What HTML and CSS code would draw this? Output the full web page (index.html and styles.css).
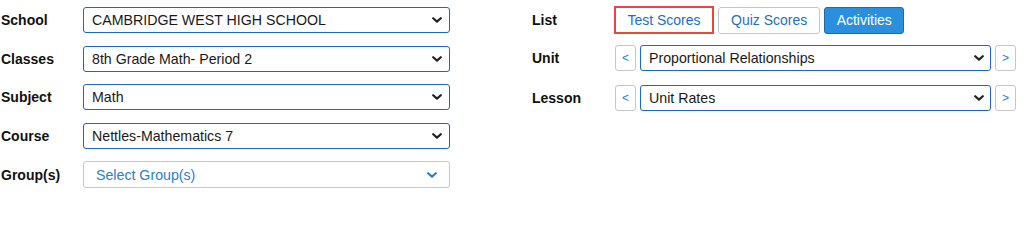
FILE: index.html
```html
<!DOCTYPE html>
<html>
<head>
<meta charset="utf-8">
<link rel="stylesheet" href="styles.css">
</head>
<body>
<div class="page">
  <div class="col left">
    <div class="row">
      <div class="label">School</div>
      <div class="select"><span class="val">CAMBRIDGE WEST HIGH SCHOOL</span><svg class="chev" viewBox="0 0 10 6" width="10" height="6"><path d="M1.2 1.2 L5 4.6 L8.8 1.2" /></svg></div>
    </div>
    <div class="row">
      <div class="label">Classes</div>
      <div class="select"><span class="val">8th Grade Math- Period 2</span><svg class="chev" viewBox="0 0 10 6" width="10" height="6"><path d="M1.2 1.2 L5 4.6 L8.8 1.2" /></svg></div>
    </div>
    <div class="row">
      <div class="label">Subject</div>
      <div class="select"><span class="val">Math</span><svg class="chev" viewBox="0 0 10 6" width="10" height="6"><path d="M1.2 1.2 L5 4.6 L8.8 1.2" /></svg></div>
    </div>
    <div class="row">
      <div class="label">Course</div>
      <div class="select"><span class="val">Nettles-Mathematics 7</span><svg class="chev" viewBox="0 0 10 6" width="10" height="6"><path d="M1.2 1.2 L5 4.6 L8.8 1.2" /></svg></div>
    </div>
    <div class="row row-group">
      <div class="label">Group(s)</div>
      <div class="select multi"><span class="val">Select Group(s)</span><svg class="chev" viewBox="0 0 10 6" width="10" height="6"><path d="M1.2 1.2 L5 4.6 L8.8 1.2" /></svg></div>
    </div>
  </div>
  <div class="col right">
    <div class="row row-list">
      <div class="label">List</div>
      <div class="btns">
        <div class="btn btn-active-outline">Test Scores</div>
        <div class="btn">Quiz Scores</div>
        <div class="btn btn-primary">Activities</div>
      </div>
    </div>
    <div class="row">
      <div class="label">Unit</div>
      <div class="nav">
        <div class="arrow">&lt;</div>
        <div class="select"><span class="val">Proportional Relationships</span><svg class="chev" viewBox="0 0 10 6" width="10" height="6"><path d="M1.2 1.2 L5 4.6 L8.8 1.2" /></svg></div>
        <div class="arrow">&gt;</div>
      </div>
    </div>
    <div class="row">
      <div class="label">Lesson</div>
      <div class="nav">
        <div class="arrow">&lt;</div>
        <div class="select"><span class="val">Unit Rates</span><svg class="chev" viewBox="0 0 10 6" width="10" height="6"><path d="M1.2 1.2 L5 4.6 L8.8 1.2" /></svg></div>
        <div class="arrow">&gt;</div>
      </div>
    </div>
  </div>
</div>
</body>
</html>
```

FILE: styles.css
```css
* { box-sizing: border-box; }
html, body { margin: 0; padding: 0; background: #fff; }
body {
  font-family: "Liberation Sans", Arial, sans-serif;
  font-size: 14px;
  color: #222;
}
.page {
  display: flex;
  align-items: flex-start;
}
.col {
  display: flex;
  flex-direction: column;
  gap: 12.5px;
}
.left {
  width: 450px;
  padding-top: 7px;
  padding-left: 1px;
}
.right {
  margin-left: 82px;
  width: 484px;
  padding-top: 6px;
  gap: 14px;
}
.row {
  display: flex;
  align-items: center;
  height: 26px;
}
.row-group { height: 27px; }
.row-list { height: 28px; margin-bottom: -3px; }
.label {
  width: 82px;
  flex: none;
  font-weight: bold;
  color: #111;
}
.right .label { width: 83px; }
.select {
  flex: 1;
  height: 100%;
  display: flex;
  align-items: center;
  justify-content: space-between;
  border: 1px solid #1d6ab9;
  border-radius: 3px;
  padding: 0 7px 0 8px;
  background: #fff;
  color: #1a1a1a;
  white-space: nowrap;
  font-size: 14.2px;
}
.chev {
  flex: none;
  fill: none;
  stroke: #222;
  stroke-width: 2.2;
  stroke-linecap: round;
  stroke-linejoin: round;
}
.select.multi {
  border-color: #c8c8c8;
  padding: 0 12px 0 12px;
  color: #2a7fd0;
}
.select.multi .chev { stroke: #2a7fd0; }
.btns {
  display: flex;
  align-items: center;
  gap: 4px;
  height: 100%;
}
.btn {
  height: 27px;
  display: flex;
  align-items: center;
  justify-content: center;
  border: 1px solid #c6c6c6;
  border-radius: 3px;
  padding: 0 12px;
  color: #1f6fc4;
  background: #fff;
  white-space: nowrap;
}
.btn-active-outline {
  height: 28px;
  width: 100px;
  padding: 0;
  border: 2px solid #e8473f;
  border-radius: 0;
  margin-left: -1px;
}
.btn-primary {
  background: #2b8fe0;
  border-color: #1f6aab;
  color: #fff;
  width: 80px;
  padding: 0;
}
.nav {
  flex: 1;
  display: flex;
  align-items: center;
  gap: 4px;
  height: 100%;
}
.arrow {
  flex: none;
  width: 21px;
  height: 100%;
  display: flex;
  align-items: center;
  justify-content: center;
  border: 1px solid #c6c6c6;
  border-radius: 3px;
  color: #2a7fd0;
  font-size: 12px;
}
.nav .select { padding-right: 6px; }
```
